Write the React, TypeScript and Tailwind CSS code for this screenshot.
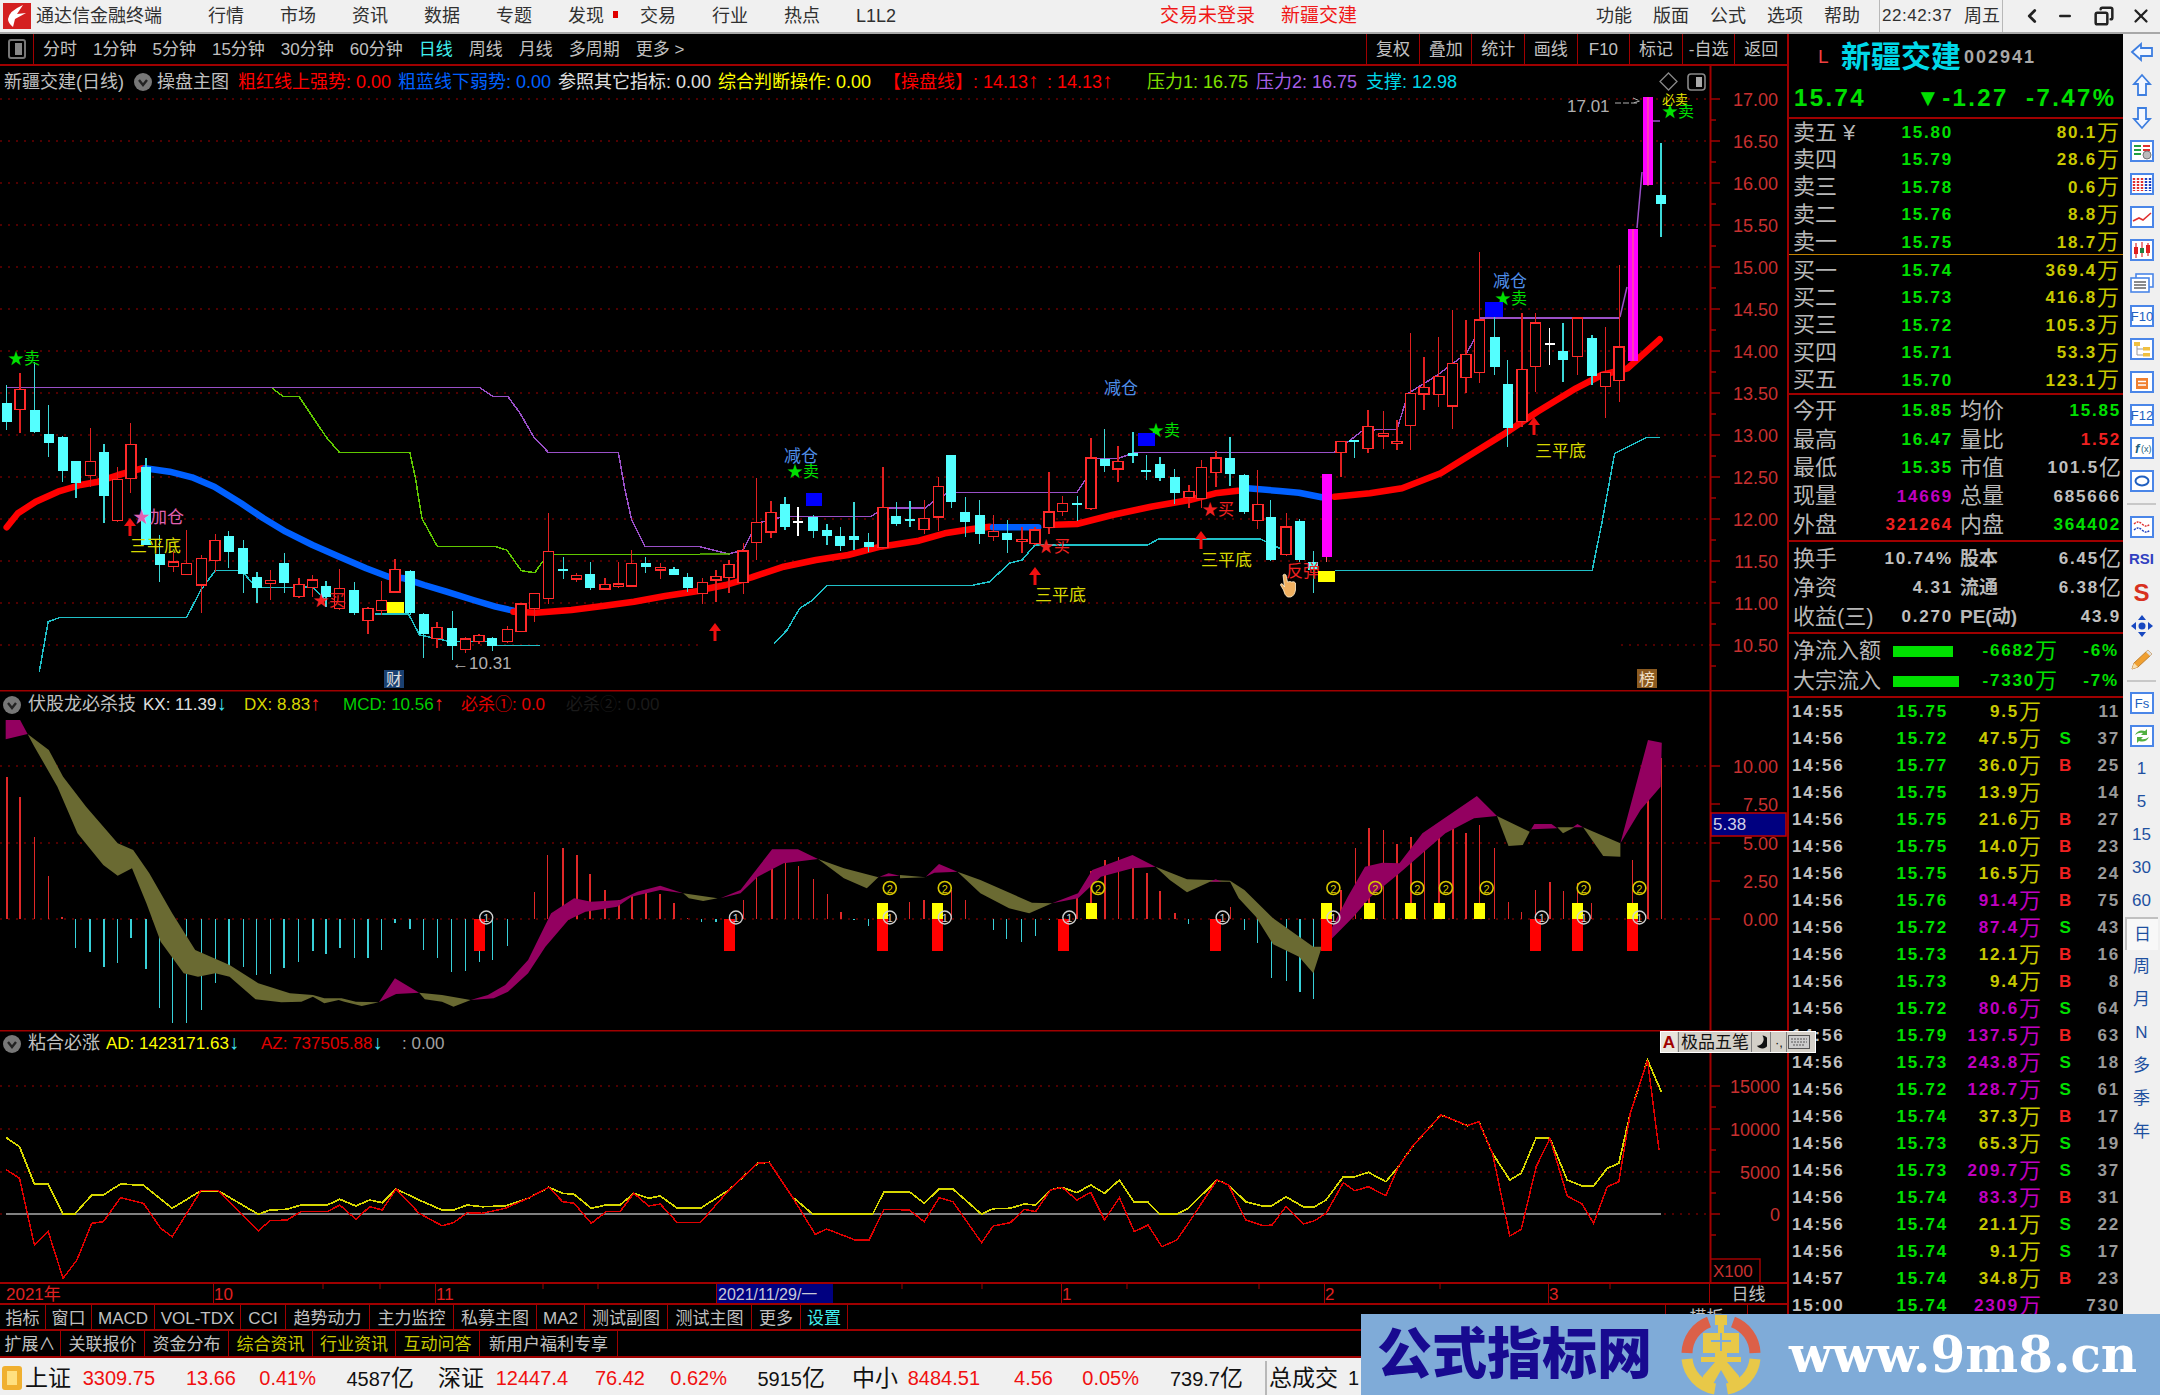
import React from 'react';
import { ChevronLeft, Copy, Minus, X } from 'lucide-react';

type Pt = [number, number];
type Candle = [number, string, number, number, number, number];
const z7 = (p: Pt): Pt => [p[0] / 2.24, 330 + p[1] / 3];
const z8 = (p: Pt): Pt => [700 + p[0] / 1.5525, 330 + p[1] / 3];
const z9 = (p: Pt): Pt => [p[0] / 1.742, 690 + p[1] / 3];
const z10 = (p: Pt): Pt => [900 + p[0] / 1.742, 690 + p[1] / 3];
const z11 = (p: Pt): Pt => [p[0] / 0.871, 1030 + p[1] / 3];
const pts = (list: Pt[], f: (p: Pt) => Pt) => list.map((p) => f(p).map((n) => n.toFixed(1)).join(',')).join(' ');

// candles: x, colour, wick top, body top, body bottom, wick bottom
const candles7: Candle[] = [
  [15, 'c', 165, 218, 275, 300], [45, 'r', 130, 178, 238, 310], [78, 'c', 95, 240, 305, 310], [109, 'c', 225, 312, 338, 382],
  [140, 'c', 318, 320, 422, 455], [170, 'c', 392, 392, 460, 505], [203, 'r', 293, 394, 436, 470], [233, 'c', 343, 366, 498, 580],
  [263, 'r', 410, 448, 572, 575], [293, 'r', 280, 344, 445, 490], [327, 'c', 385, 412, 645, 645], [358, 'c', 615, 672, 706, 755],
  [388, 'r', 665, 696, 710, 725], [418, 'r', 600, 700, 733, 735], [452, 'r', 675, 686, 765, 850], [482, 'r', 612, 632, 692, 725],
  [512, 'c', 603, 618, 666, 715], [545, 'c', 630, 654, 733, 788], [576, 'c', 725, 740, 773, 820], [606, 'r', 720, 752, 760, 810],
  [637, 'c', 670, 698, 760, 788], [670, 'r', 743, 764, 800, 803], [700, 'r', 735, 750, 772, 800], [730, 'c', 752, 768, 800, 830],
  [761, 'r', 716, 776, 836, 840], [794, 'c', 757, 780, 850, 855], [824, 'r', 830, 835, 872, 913], [855, 'r', 752, 812, 842, 855],
  [885, 'r', 688, 718, 786, 790], [919, 'c', 720, 722, 850, 855], [949, 'c', 850, 852, 913, 985], [979, 'r', 875, 893, 925, 953],
  [1013, 'c', 843, 893, 948, 990], [1043, 'r', 920, 927, 958, 968], [1073, 'r', 913, 917, 935, 942], [1103, 'c', 920, 924, 947, 962],
  [1137, 'r', 888, 898, 935, 940], [1167, 'r', 822, 822, 904, 905], [1197, 'r', 790, 790, 835, 875], [1228, 'r', 550, 664, 805, 822],
  [1262, 'c', 680, 716, 722, 748], [1292, 'r', 728, 737, 747, 757], [1322, 'c', 695, 731, 775, 780], [1355, 'r', 745, 763, 777, 778],
  [1385, 'r', 695, 762, 770, 775], [1415, 'r', 660, 700, 768, 770], [1446, 'c', 680, 699, 711, 730], [1480, 'r', 700, 712, 720, 748],
  [1510, 'c', 712, 717, 734, 735], [1540, 'c', 730, 740, 775, 785],
];
const candles8: Candle[] = [
  [4, 'r', 745, 757, 790, 822], [25, 'r', 720, 740, 750, 815], [45, 'r', 690, 703, 742, 790], [67, 'r', 640, 663, 757, 792],
  [88, 'r', 445, 578, 637, 690], [110, 'r', 513, 547, 606, 625], [132, 'c', 500, 523, 590, 600], [152, 'w', 532, 573, 575, 617],
  [176, 'c', 555, 560, 603, 625], [197, 'c', 583, 600, 617, 645], [218, 'c', 590, 618, 647, 662], [239, 'c', 517, 618, 630, 660],
  [262, 'c', 608, 636, 650, 665], [284, 'r', 410, 532, 653, 656], [305, 'c', 515, 559, 582, 587], [326, 'c', 514, 568, 574, 590],
  [348, 'r', 510, 565, 598, 612], [370, 'r', 440, 470, 561, 602], [390, 'c', 374, 374, 515, 535], [412, 'c', 500, 545, 577, 620],
  [434, 'c', 510, 555, 612, 643], [456, 'r', 555, 605, 620, 632], [477, 'c', 570, 608, 630, 670], [500, 'r', 590, 628, 634, 668],
  [520, 'r', 590, 600, 640, 645], [542, 'r', 425, 546, 592, 612], [563, 'r', 497, 520, 544, 558], [586, 'c', 497, 519, 522, 572],
  [607, 'r', 325, 384, 535, 540], [628, 'c', 297, 388, 408, 425], [649, 'r', 348, 394, 417, 455], [672, 'c', 305, 370, 378, 400],
  [693, 'c', 375, 420, 423, 450], [714, 'c', 380, 402, 445, 453], [737, 'c', 418, 442, 490, 522], [759, 'r', 465, 484, 502, 533],
  [779, 'r', 390, 412, 505, 533], [801, 'r', 363, 384, 427, 470], [823, 'c', 320, 383, 432, 468], [845, 'c', 432, 434, 545, 552],
  [866, 'r', 420, 524, 571, 597], [886, 'c', 510, 560, 690, 692], [910, 'r', 550, 591, 673, 678], [931, 'c', 567, 572, 690, 695],
  [952, 'c', 662, 695, 720, 788], [973, 'p', 433, 433, 680, 695], [995, 'r', 335, 335, 367, 440], [1016, 'c', 335, 330, 337, 383],
  [1037, 'r', 240, 290, 355, 370], [1061, 'r', 243, 311, 318, 358], [1082, 'r', 270, 334, 341, 360], [1103, 'r', 10, 190, 287, 360],
  [1124, 'r', 80, 172, 192, 240], [1147, 'r', 22, 140, 193, 230], [1168, 'r', -60, 100, 228, 296], [1189, 'r', -30, 73, 143, 190],
  [1210, 'r', -234, -30, 128, 158], [1234, 'c', -39, 22, 112, 135], [1254, 'c', 90, 163, 293, 352], [1276, 'r', -51, 118, 275, 290],
  [1297, 'r', -51, -21, 110, 185], [1319, 'w', -6, 38, 40, 105], [1340, 'c', -20, 64, 90, 157], [1362, 'r', -39, -36, 80, 135],
  [1385, 'c', 15, 24, 138, 165], [1406, 'r', -9, 128, 170, 265], [1427, 'r', -195, 51, 152, 215],
];

const redA: Pt[] = [[15, 592], [40, 550], [80, 515], [130, 485], [180, 465], [220, 455], [265, 435], [318, 415]];
const blueA: Pt[] = [[325, 415], [380, 425], [430, 442], [480, 470], [540, 520], [590, 565], [640, 605], [700, 645], [760, 680], [820, 715], [870, 740], [905, 745], [950, 765], [1000, 785], [1060, 810], [1110, 830], [1150, 842]];
const redB: Pt[] = [[1150, 845], [1200, 848], [1280, 840], [1350, 828], [1420, 815], [1490, 798], [1568, 782]];
const redC: Pt[] = [[0, 780], [40, 765], [80, 742], [130, 710], [180, 690], [230, 675], [280, 650], [340, 632], [380, 610], [420, 598], [450, 590]];
const blueC: Pt[] = [[455, 592], [525, 592]];
const redD: Pt[] = [[540, 585], [585, 582], [640, 555], [700, 530], [760, 510], [800, 490], [835, 482]];
const blueD: Pt[] = [[850, 475], [900, 483], [930, 488], [965, 502]];
const redE: Pt[] = [[985, 500], [1040, 490], [1090, 475], [1150, 430], [1200, 370], [1250, 310], [1300, 245], [1360, 175], [1400, 135], [1440, 115], [1490, 28]];
const purpleA: Pt[] = [[15, 173], [1075, 173], [1105, 200], [1138, 200], [1165, 250], [1195, 320], [1228, 367], [1385, 367], [1400, 480], [1415, 570], [1445, 650], [1568, 650]];
const purpleB: Pt[] = [[0, 650], [45, 672], [67, 660], [88, 580], [130, 560], [265, 560], [285, 534], [350, 534], [365, 510], [385, 488], [585, 488], [605, 430], [610, 385], [650, 385], [675, 367], [985, 367], [1030, 300], [1082, 298], [1100, 190], [1145, 135], [1190, 70], [1210, 0], [1212, -36], [1427, -36]];
const greenA: Pt[] = [[610, 175], [635, 200], [670, 200], [700, 260], [730, 320], [760, 367], [918, 367], [930, 440], [945, 565], [980, 650], [1110, 650], [1135, 660], [1168, 722], [1198, 728], [1215, 695], [1240, 673], [1568, 673]];
const cyanA: Pt[] = [[88, 1025], [108, 875], [135, 862], [418, 862], [450, 780], [482, 722], [540, 722], [575, 772], [660, 772], [700, 770], [730, 810]];
const cyanB: Pt[] = [[840, 852], [915, 852], [940, 915], [1010, 935], [1090, 935], [1115, 947], [1210, 947]];
const cyanC: Pt[] = [[115, 940], [135, 900], [155, 835], [175, 810], [197, 767], [420, 767], [450, 755], [480, 700], [500, 690], [520, 645], [695, 645], [712, 627], [870, 627], [900, 655]];
const cyanD: Pt[] = [[985, 722], [1385, 722], [1400, 580], [1420, 370], [1470, 322], [1490, 322]];

const bodyClass: Record<string, string> = {
  c: 'fill-[#54ffff]', r: 'fill-black stroke-[#ff2a2a]', w: 'fill-white', p: 'fill-[#ff00ff]',
};
const wickClass: Record<string, string> = {
  c: 'stroke-[#3cd8d8]', r: 'stroke-[#e02020]', w: 'stroke-white', p: 'stroke-[#ff5a60]',
};

function CandleMark({ x, k, wt, bt, bb, wb, w = 10 }: { x: number; k: string; wt: number; bt: number; bb: number; wb: number; w?: number }) {
  return (
    <g shapeRendering="crispEdges">
      <line x1={x} x2={x} y1={wt} y2={wb} className={wickClass[k]} strokeWidth={1.3} />
      <rect x={x - w / 2} y={bt} width={w} height={Math.max(bb - bt, 2)} className={bodyClass[k]} strokeWidth={k === 'r' ? 1.4 : 0} />
    </g>
  );
}

function Thin({ list, f, cls }: { list: Pt[]; f: (p: Pt) => Pt; cls: string }) {
  return <polyline points={pts(list, f)} fill="none" className={cls} strokeWidth={1.5} shapeRendering="crispEdges" />;
}
function Thick({ list, f, cls }: { list: Pt[]; f: (p: Pt) => Pt; cls: string }) {
  return <polyline points={pts(list, f)} fill="none" className={cls} strokeWidth={6.5} strokeLinecap="round" strokeLinejoin="round" />;
}

function Label({ x, y, cls, size = 17, children }: { x: number; y: number; cls: string; size?: number; children: React.ReactNode }) {
  return <text x={x} y={y} className={cls} fontSize={size}>{children}</text>;
}
function UpArrow({ x, y }: { x: number; y: number }) {
  return <path d={`M${x} ${y} l-6 8 h4.5 v10 h3 v-10 h4.5 z`} className="fill-[#f01010]" />;
}

function Chevron() {
  return (
    <svg viewBox="0 0 18 18" className="w-[18px] h-[18px] shrink-0">
      <circle cx="9" cy="9" r="9" className="fill-[#777]" />
      <path d="M5 7 L9 12 L13 7" className="stroke-[#222]" strokeWidth="2.4" fill="none" />
    </svg>
  );
}

const priceTicks = [17, 16.5, 16, 15.5, 15, 14.5, 14, 13.5, 13, 12.5, 12, 11.5, 11, 10.5];
const py = (p: number) => 99 + (17 - p) * 84;

function MainChart() {
  return (
    <div className="relative h-[624px] w-[1787px] shrink-0">
      <svg viewBox="0 66 1787 624" width={1787} height={624} className="block">
        {priceTicks.map((p) => (
          <g key={p}>
            {p === 10.5 ? (
              <>
                <line x1={0} x2={700} y1={py(p)} y2={py(p)} className="stroke-[#a00000]" strokeDasharray="2 6" />
                <line x1={1621} x2={1710} y1={py(p)} y2={py(p)} className="stroke-[#a00000]" strokeDasharray="2 6" />
              </>
            ) : (
              <line x1={0} x2={1710} y1={py(p)} y2={py(p)} className="stroke-[#a00000]" strokeDasharray="2 6" />
            )}
            <line x1={1710} x2={1720} y1={py(p)} y2={py(p)} className="stroke-[#a00000]" strokeWidth={1.5} />
            <line x1={1710} x2={1716} y1={py(p) + 21} y2={py(p) + 21} className="stroke-[#a00000]" strokeWidth={1.5} />
            <text x={1778} y={py(p) + 7} textAnchor="end" className="fill-[#c83030]" fontSize={18}>{p.toFixed(2)}</text>
          </g>
        ))}
        <line x1={1710.5} x2={1710.5} y1={66} y2={690} className="stroke-[#a00000]" strokeWidth={2} />

        <Thin list={purpleA} f={z7} cls="stroke-[#9a50c8]" />
        <Thin list={purpleB} f={z8} cls="stroke-[#9a50c8]" />
        <polyline points="1620,317 1627,287" className="stroke-[#9a50c8]" strokeWidth={1.5} fill="none" />
        <polyline points="1637,228 1642,172" className="stroke-[#9a50c8]" strokeWidth={1.5} fill="none" />
        <polyline points="1653,121 1660,121" className="stroke-[#9a50c8]" strokeWidth={1.5} fill="none" />
        <Thin list={greenA} f={z7} cls="stroke-[#60c800]" />
        <polyline points="700,554 730,554" className="stroke-[#60c800]" strokeWidth={1.5} fill="none" />
        <Thin list={cyanA} f={z7} cls="stroke-[#20c0c8]" />
        <Thin list={cyanB} f={z7} cls="stroke-[#20c0c8]" />
        <Thin list={cyanC} f={z8} cls="stroke-[#20c0c8]" />
        <Thin list={cyanD} f={z8} cls="stroke-[#20c0c8]" />

        <Thick list={redA} f={z7} cls="stroke-[#ff0000]" />
        <Thick list={blueA} f={z7} cls="stroke-[#0060ff]" />
        <Thick list={redB} f={z7} cls="stroke-[#ff0000]" />
        <Thick list={redC} f={z8} cls="stroke-[#ff0000]" />
        <Thick list={blueC} f={z8} cls="stroke-[#0060ff]" />
        <Thick list={redD} f={z8} cls="stroke-[#ff0000]" />
        <Thick list={blueD} f={z8} cls="stroke-[#0060ff]" />
        <Thick list={redE} f={z8} cls="stroke-[#ff0000]" />

        {candles7.map((c) => {
          const [x, wt] = z7([c[0], c[2]]);
          return <CandleMark key={`a${c[0]}`} x={x} k={c[1]} wt={wt} bt={z7([0, c[3]])[1]} bb={z7([0, c[4]])[1]} wb={z7([0, c[5]])[1]} />;
        })}
        {candles8.map((c) => {
          const [x, wt] = z8([c[0], c[2]]);
          return <CandleMark key={`b${c[0]}`} x={x} k={c[1]} wt={wt} bt={z8([0, c[3]])[1]} bb={z8([0, c[4]])[1]} wb={z8([0, c[5]])[1]} />;
        })}
        <CandleMark x={1592} k="c" wt={335} bt={338} bb={376} wb={385} />
        <rect x={1628} y={229} width={10} height={132} className="fill-[#ff00ff]" />
        <line x1={1633} x2={1633} y1={229} y2={361} className="stroke-[#ff7070]" />
        <rect x={1643} y={97} width={10} height={88} className="fill-[#ff00ff]" />
        <line x1={1648} x2={1648} y1={97} y2={186} className="stroke-[#ff7070]" />
        <CandleMark x={1661} k="c" wt={143} bt={195} bb={204} wb={237} />

        {/* signal labels */}
        <Label x={8} y={364} cls="fill-[#00e000]" size={16}>★卖</Label>
        <UpArrow x={130} y={518} />
        <Label x={133} y={523} cls="fill-[#e060b0]" size={17}>★加仓</Label>
        <Label x={130} y={552} cls="fill-[#d8d800]">三平底</Label>
        <Label x={313} y={606} cls="fill-[#f02020]" size={16}>★买</Label>
        <rect x={387} y={602} width={17} height={11} className="fill-[#ffff00]" />
        <Label x={452} y={669} cls="fill-[#b0b0b0]" size={17}>←10.31</Label>
        <rect x={384} y={670} width={20} height={18} className="fill-[#1a4070]" />
        <Label x={386} y={685} cls="fill-[#e0e0e0]" size={16}>财</Label>
        <Label x={784} y={462} cls="fill-[#4f8ee8]" size={17}>减仓</Label>
        <Label x={787} y={477} cls="fill-[#00e000]" size={16}>★卖</Label>
        <rect x={806} y={493} width={16} height={13} className="fill-[#0000ff]" />
        <Label x={1104} y={394} cls="fill-[#4f8ee8]" size={17}>减仓</Label>
        <Label x={1148} y={436} cls="fill-[#00e000]" size={16}>★卖</Label>
        <rect x={1138} y={433} width={17} height={13} className="fill-[#0000ff]" />
        <Label x={1038} y={552} cls="fill-[#f02020]" size={16}>★买</Label>
        <UpArrow x={1035} y={567} />
        <Label x={1035} y={601} cls="fill-[#d8d800]">三平底</Label>
        <UpArrow x={715} y={623} />
        <Label x={1202} y={515} cls="fill-[#f02020]" size={16}>★买</Label>
        <UpArrow x={1201} y={531} />
        <Label x={1201} y={566} cls="fill-[#d8d800]">三平底</Label>
        <Label x={1286} y={577} cls="fill-[#f02020]" size={17}>反弹</Label>
        <rect x={1318} y={571} width={17} height={11} className="fill-[#ffff00]" />
        <path d="M1283 575 q1.5 -1.5 3 0 l1.5 7 q3 -1 4 0 q3 -1 4 1 l0 7 q-1 6 -5 7 h-3 q-3 -2 -4 -7 l-3 -5 q0 -2 2 -1 l2 3 z" className="fill-[#f0b060] stroke-[#fff0d0]" strokeWidth={0.8} />
        <UpArrow x={1534} y={417} />
        <Label x={1535} y={457} cls="fill-[#d8d800]">三平底</Label>
        <Label x={1493} y={287} cls="fill-[#4f8ee8]" size={17}>减仓</Label>
        <Label x={1495} y={304} cls="fill-[#00e000]" size={16}>★卖</Label>
        <rect x={1485} y={302} width={18} height={15} className="fill-[#0000ff]" />
        <Label x={1567} y={112} cls="fill-[#b0b0b0]" size={17}>17.01</Label>
        <path d="M1615 103 h24 m-6 -5 l7 3 l-7 2" className="stroke-[#b0b0b0]" fill="none" strokeDasharray="6 2" />
        <Label x={1662} y={104} cls="fill-[#e8e800]" size={13}>必卖</Label>
        <Label x={1662} y={117} cls="fill-[#00e000]" size={16}>★卖</Label>
        <rect x={1637} y={669} width={20} height={19} className="fill-[#8b5a20]" />
        <Label x={1639} y={685} cls="fill-[#f0e0c8]" size={16}>榜</Label>
        <path d="M1668.5 73 l8.5 8.5 l-8.5 8.5 l-8.5 -8.5 z" fill="none" className="stroke-[#888]" strokeWidth={1.3} />
        <rect x={1688} y={74} width={17} height={16} rx={3} fill="none" className="stroke-[#888]" strokeWidth={1.6} />
        <rect x={1696} y={77} width={6} height={10} className="fill-[#aaa]" />
      </svg>
      <div className="absolute left-0 top-0 h-[30px] pt-[2px] flex items-center text-[18px] whitespace-nowrap">
        <span className="w-[134px] pl-[4px] text-[#c0c0c0]">新疆交建(日线)</span>
        <Chevron />
        <span className="w-[86px] pl-[5px] text-[#c0c0c0]">操盘主图</span>
        <span className="w-[160px] text-[#ff0000]">粗红线上强势: 0.00</span>
        <span className="w-[160px] text-[#0060ff]">粗蓝线下弱势: 0.00</span>
        <span className="w-[160px] text-[#e0e0e0]">参照其它指标: 0.00</span>
        <span className="w-[165px] text-[#ffff00]">综合判断操作: 0.00</span>
        <span className="w-[164px] text-[#ff0000]">【操盘线】: 14.13<span className="text-[21px] leading-none font-bold">↑</span></span>
        <span className="w-[100px] text-[#ff0000]">: 14.13<span className="text-[21px] leading-none font-bold">↑</span></span>
        <span className="w-[109px] text-[#80e000]">压力1: 16.75</span>
        <span className="w-[110px] text-[#a860e8]">压力2: 16.75</span>
        <span className="text-[#00d8e8]">支撑: 12.98</span>
      </div>
    </div>
  );
}

const ribbons: { k: 'p' | 'o'; f: (p: Pt) => Pt; d: Pt[] }[] = [
  { k: 'p', f: z9, d: [[10, 90], [35, 90], [48, 132], [10, 148]] },
  { k: 'o', f: z9, d: [[48, 132], [85, 180], [110, 260], [150, 350], [205, 460], [232, 480], [260, 550], [300, 670], [340, 780], [400, 825], [450, 880], [505, 910], [545, 915], [565, 925], [595, 925], [620, 935], [660, 937], [630, 948], [600, 935], [590, 930], [565, 940], [545, 920], [525, 935], [490, 937], [445, 928], [400, 860], [375, 850], [345, 860], [320, 850], [280, 755], [255, 640], [230, 535], [205, 557], [180, 525], [135, 430], [100, 290], [60, 170]] },
  { k: 'p', f: z9, d: [[660, 937], [688, 865], [730, 908], [690, 912]] },
  { k: 'o', f: z9, d: [[730, 908], [770, 915], [820, 930], [790, 950], [770, 935], [740, 928]] },
  { k: 'p', f: z9, d: [[820, 930], [850, 915], [880, 885], [920, 810], [960, 670], [1000, 625], [1030, 635], [1080, 630], [1110, 605], [1150, 587], [1190, 610], [1150, 600], [1100, 620], [1075, 650], [1020, 665], [990, 690], [950, 770], [920, 850], [885, 905], [860, 925]] },
  { k: 'o', f: z9, d: [[1190, 610], [1250, 625], [1225, 633], [1200, 625]] },
  { k: 'p', f: z9, d: [[1255, 625], [1290, 600], [1345, 478], [1390, 478], [1425, 507], [1365, 520], [1320, 560], [1290, 610]] },
  { k: 'o', f: z9, d: [[1425, 507], [1470, 535], [1530, 562], [1510, 595], [1470, 565]] },
  { k: 'p', f: z9, d: [[1530, 562], [1548, 550], [1568, 557], [1530, 560]] },
  { k: 'o', f: z10, d: [[0, 555], [45, 562], [0, 565]] },
  { k: 'p', f: z10, d: [[45, 560], [68, 522], [100, 545], [60, 548]] },
  { k: 'o', f: z10, d: [[100, 545], [140, 570], [230, 638], [265, 640], [225, 670], [190, 655], [140, 610]] },
  { k: 'p', f: z10, d: [[265, 640], [310, 610], [335, 540], [405, 495], [445, 530], [405, 535], [350, 560], [310, 625]] },
  { k: 'o', f: z10, d: [[445, 530], [500, 568], [575, 572], [600, 600], [650, 685], [720, 770], [735, 770], [720, 850], [695, 800], [650, 763], [620, 680], [590, 625], [575, 575], [540, 575], [500, 607], [470, 570]] },
  { k: 'p', f: z10, d: [[540, 575], [550, 568], [560, 575]] },
  { k: 'p', f: z10, d: [[735, 770], [780, 620], [810, 530], [840, 518], [870, 520], [910, 430], [1005, 318], [1040, 378], [1000, 385], [950, 430], [870, 550], [820, 620], [790, 680], [750, 750]] },
  { k: 'o', f: z10, d: [[1040, 378], [1097, 425], [1085, 465], [1060, 468]] },
  { k: 'p', f: z10, d: [[1097, 425], [1105, 402], [1135, 402], [1145, 415], [1100, 418]] },
  { k: 'o', f: z10, d: [[1145, 412], [1175, 412], [1155, 430]] },
  { k: 'p', f: z10, d: [[1172, 412], [1180, 402], [1190, 412]] },
  { k: 'o', f: z10, d: [[1190, 412], [1255, 460], [1255, 500], [1225, 498]] },
  { k: 'p', f: z10, d: [[1255, 460], [1303, 150], [1327, 158], [1325, 290], [1290, 360]] },
];
const bars9: Pt[] = [[12, 262], [35, 320], [60, 442], [85, 558], [108, 680], [131, 775], [157, 785], [181, 830], [205, 820], [228, 745], [254, 838], [278, 955], [301, 1000], [325, 1000], [351, 960], [375, 878], [399, 830], [424, 830], [447, 855], [471, 852], [495, 835], [520, 815], [545, 783], [568, 793], [592, 775], [618, 803], [641, 803], [665, 780], [688, 698], [714, 717], [738, 780], [762, 805], [787, 845], [811, 843], [835, 815], [858, 810], [884, 767], [931, 607], [954, 496], [981, 473], [1005, 495], [1028, 553], [1054, 600], [1078, 630], [1101, 615], [1125, 610], [1150, 612], [1174, 640], [1198, 685], [1222, 697], [1247, 697], [1295, 630], [1318, 558], [1345, 500], [1368, 508], [1391, 527], [1417, 568], [1441, 613], [1465, 665], [1488, 690], [1513, 707]];
const bars10: Pt[] = [[17, 635], [42, 630], [90, 600], [114, 630], [163, 720], [186, 748], [212, 757], [236, 738], [260, 690], [308, 625], [333, 543], [357, 510], [381, 500], [406, 497], [430, 548], [453, 603], [479, 670], [503, 703], [576, 652], [600, 720], [623, 760], [647, 865], [673, 873], [697, 905], [720, 928], [768, 600], [793, 473], [817, 415], [842, 420], [866, 463], [890, 442], [914, 430], [939, 418], [963, 418], [986, 430], [1010, 405], [1036, 473], [1060, 635], [1083, 665], [1107, 600], [1132, 577], [1156, 603], [1180, 580], [1205, 640], [1276, 510], [1303, 225], [1327, 205]];
const redBlocks = [...[835, 1271, 1538].map((x) => x / 1.742), ...[66, 284, 550, 743, 1107, 1180, 1276].map((x) => 900 + x / 1.742)];
const yellowBlocks = [1538 / 1.742, ...[66, 333, 743, 817, 890, 939, 1010, 1180, 1276].map((x) => 900 + x / 1.742)];
const ones = [...[847, 1282, 1550].map((x) => x / 1.742), ...[78, 295, 562, 755, 1118, 1191, 1288].map((x) => 900 + x / 1.742)];
const twos = [1550 / 1.742, ...[78, 345, 755, 828, 901, 951, 1022, 1191, 1288].map((x) => 900 + x / 1.742)];

function Bar({ p, f }: { p: Pt; f: (p: Pt) => Pt }) {
  const [x, y] = f(p);
  return <line x1={x} x2={x} y1={919} y2={y} className={y < 919 ? 'stroke-[#e02828]' : 'stroke-[#38d0d8]'} strokeWidth={1.4} shapeRendering="crispEdges" />;
}

function DragonChart() {
  const axis: [string, number][] = [['10.00', 766], ['7.50', 804], ['5.00', 843], ['2.50', 881], ['0.00', 919]];
  return (
    <div className="relative h-[340px] w-[1787px] shrink-0">
      <svg viewBox="0 690 1787 340" width={1787} height={340} className="block">
        <line x1={0} x2={1787} y1={690.5} y2={690.5} className="stroke-[#a00000]" strokeWidth={2} />
        {[766, 843, 919].map((y) => <line key={y} x1={0} x2={1710} y1={y} y2={y} className="stroke-[#a00000]" strokeDasharray="2 6" />)}
        {axis.map(([t, y]) => (
          <g key={t}>
            <line x1={1710} x2={1720} y1={y} y2={y} className="stroke-[#a00000]" strokeWidth={1.5} />
            <text x={1778} y={y + 7} textAnchor="end" className="fill-[#c83030]" fontSize={18}>{t}</text>
          </g>
        ))}
        <line x1={1710.5} x2={1710.5} y1={690} y2={1030} className="stroke-[#a00000]" strokeWidth={2} />
        {bars9.map((p) => <Bar key={`b${p[0]}`} p={p} f={z9} />)}
        {bars10.map((p) => <Bar key={`c${p[0]}`} p={p} f={z10} />)}
        {ribbons.map((r, i) => <polygon key={i} points={pts(r.d, r.f)} className={r.k === 'p' ? 'fill-[#930060]' : 'fill-[#6a6a32]'} />)}
        {yellowBlocks.map((x) => <rect key={x} x={x - 5.5} y={903} width={11} height={16} className="fill-[#ffff00]" shapeRendering="crispEdges" />)}
        {redBlocks.map((x) => <rect key={x} x={x - 5.5} y={919} width={11} height={32} className="fill-[#ff0000]" shapeRendering="crispEdges" />)}
        {ones.map((x) => (
          <g key={x}>
            <ellipse cx={x} cy={917.5} rx={6.5} ry={6.5} fill="none" className="stroke-[#d0d0d0]" strokeWidth={1.4} />
            <text x={x} y={922} textAnchor="middle" className="fill-[#d0d0d0]" fontSize={11}>1</text>
          </g>
        ))}
        {twos.map((x) => (
          <g key={x}>
            <ellipse cx={x} cy={888} rx={6.5} ry={6.5} fill="none" className="stroke-[#d8c800]" strokeWidth={1.6} />
            <text x={x} y={892.5} textAnchor="middle" className="fill-[#d8c800]" fontSize={11}>2</text>
          </g>
        ))}
        <rect x={1711} y={813} width={75} height={23} className="fill-[#000080] stroke-[#c00000]" strokeWidth={1.5} />
        <text x={1713} y={830} className="fill-[#d0d0e8]" fontSize={17}>5.38</text>
      </svg>
      <div className="absolute left-0 top-0 h-[27px] pt-[2px] pl-[3px] flex items-center text-[17px] whitespace-nowrap">
        <Chevron />
        <span className="w-[122px] pl-[7px] text-[18px] text-[#c0c0c0]">伏股龙必杀技</span>
        <span className="w-[101px] text-[#e0e0e0]">KX: 11.39<span className="text-[20px] leading-none font-bold text-[#40e0f0]">↓</span></span>
        <span className="w-[99px] text-[#d8d800]">DX: 8.83<span className="text-[20px] leading-none font-bold text-[#ff2020]">↑</span></span>
        <span className="w-[118px] text-[#00d000]">MCD: 10.56<span className="text-[20px] leading-none font-bold text-[#ff2020]">↑</span></span>
        <span className="w-[105px] text-[#e00000]">必杀①: 0.0</span>
        <span className="text-[#1a1a1a]">必杀②: 0.00</span>
      </div>
    </div>
  );
}

const yellowLine: Pt[] = [[5, 322], [17, 350], [30, 462], [42, 463], [55, 553], [65, 553], [80, 495], [90, 495], [105, 462], [125, 466], [150, 535], [175, 482], [190, 482], [225, 553], [235, 540], [250, 538], [262, 525], [285, 525], [296, 508], [310, 528], [322, 510], [333, 518], [345, 477], [365, 510], [385, 540], [395, 540], [407, 525], [420, 530], [440, 528], [460, 505], [478, 472], [490, 490], [500, 493], [515, 535], [528, 525], [540, 525], [552, 490], [565, 505], [575, 498], [590, 535], [610, 535], [635, 480], [660, 400], [670, 397], [690, 500], [708, 553], [760, 553], [770, 485], [792, 485], [805, 520], [818, 477], [830, 477], [855, 553], [865, 536], [880, 535], [892, 522], [902, 525], [915, 480], [925, 472], [938, 488], [950, 465], [962, 490], [975, 450], [988, 517], [1000, 517], [1010, 553], [1025, 553], [1035, 535], [1060, 450], [1070, 465], [1085, 515], [1100, 528], [1108, 527], [1120, 500], [1135, 530], [1145, 530], [1155, 510], [1170, 440], [1180, 440], [1192, 427], [1207, 455], [1218, 410], [1230, 350], [1255, 255], [1270, 275], [1278, 287], [1288, 275], [1300, 370], [1315, 450], [1325, 430], [1338, 323], [1350, 325], [1365, 450], [1378, 468], [1388, 468], [1400, 415], [1410, 400], [1420, 250], [1435, 90], [1447, 185]];
const redLine: Pt[] = [[5, 418], [17, 445], [30, 645], [42, 605], [55, 745], [67, 690], [80, 580], [90, 575], [105, 503], [125, 520], [140, 595], [150, 620], [175, 482], [190, 482], [225, 603], [235, 572], [250, 570], [262, 545], [285, 545], [296, 525], [310, 568], [322, 530], [333, 540], [345, 477], [365, 550], [385, 587], [395, 578], [407, 548], [420, 550], [440, 535], [460, 505], [478, 472], [490, 515], [500, 520], [515, 580], [528, 545], [540, 545], [552, 490], [565, 528], [575, 522], [590, 578], [610, 578], [635, 480], [660, 400], [670, 397], [690, 500], [710, 613], [720, 597], [745, 630], [757, 630], [770, 538], [792, 540], [805, 575], [818, 503], [830, 515], [855, 638], [865, 588], [880, 578], [892, 538], [902, 545], [915, 480], [925, 472], [938, 510], [950, 487], [962, 570], [975, 503], [988, 605], [1000, 585], [1012, 650], [1025, 630], [1035, 580], [1060, 450], [1070, 465], [1085, 570], [1100, 587], [1108, 585], [1120, 530], [1135, 582], [1145, 572], [1155, 550], [1170, 458], [1180, 482], [1192, 470], [1207, 497], [1218, 410], [1230, 350], [1255, 255], [1270, 275], [1278, 287], [1288, 275], [1300, 370], [1315, 618], [1325, 598], [1338, 410], [1350, 325], [1365, 498], [1378, 522], [1388, 580], [1400, 470], [1410, 455], [1420, 250], [1435, 90], [1445, 360]];

function AdChart() {
  const axis: [string, number][] = [['15000', 1086], ['10000', 1129], ['5000', 1172], ['0', 1214]];
  return (
    <div className="relative h-[252px] w-[1787px] shrink-0">
      <svg viewBox="0 1030 1787 252" width={1787} height={252} className="block">
        <line x1={0} x2={1787} y1={1030.5} y2={1030.5} className="stroke-[#a00000]" strokeWidth={2} />
        {axis.map(([t, y]) => (
          <g key={t}>
            <line x1={0} x2={1710} y1={y} y2={y} className="stroke-[#a00000]" strokeDasharray="2 6" />
            <line x1={1710} x2={1720} y1={y} y2={y} className="stroke-[#a00000]" strokeWidth={1.5} />
            <line x1={1710} x2={1716} y1={y + 21} y2={y + 21} className="stroke-[#a00000]" strokeWidth={1.5} />
            <text x={1780} y={y + 7} textAnchor="end" className="fill-[#c83030]" fontSize={18}>{t}</text>
          </g>
        ))}
        <line x1={1710.5} x2={1710.5} y1={1030} y2={1282} className="stroke-[#a00000]" strokeWidth={2} />
        <line x1={6} x2={1661} y1={1214} y2={1214} className="stroke-[#808080]" strokeWidth={2} />
        <polyline points={pts(yellowLine, z11)} fill="none" className="stroke-[#d8d800]" strokeWidth={1.7} shapeRendering="crispEdges" />
        <polyline points={pts(redLine, z11)} fill="none" className="stroke-[#e00000]" strokeWidth={1.5} shapeRendering="crispEdges" />
        <path d="M1711 1259 h49 v23" fill="none" className="stroke-[#a00000]" strokeWidth={1.5} />
        <text x={1713} y={1277} className="fill-[#c83030]" fontSize={17}>X100</text>
      </svg>
      <div className="absolute left-0 top-0 h-[25px] pt-[2px] pl-[3px] flex items-center text-[17px] whitespace-nowrap">
        <Chevron />
        <span className="w-[85px] pl-[7px] text-[18px] text-[#c0c0c0]">粘合必涨</span>
        <span className="w-[155px] text-[#ffff00]">AD: 1423171.63<span className="text-[20px] leading-none font-bold text-[#40e0f0]">↓</span></span>
        <span className="w-[141px] text-[#e00000]">AZ: 737505.88<span className="text-[20px] leading-none font-bold text-[#40e0f0]">↓</span></span>
        <span className="text-[#a0a0a0]">: 0.00</span>
      </div>
    </div>
  );
}

function TitleBar() {
  const menus = ['行情', '市场', '资讯', '数据', '专题'];
  return (
    <div className="h-[34px] shrink-0 flex items-center bg-[#f0f0f0] border-b-2 border-[#a8a8a8] text-[18px] text-[#303030] whitespace-nowrap">
      <svg viewBox="0 0 28 26" className="ml-[3px] w-[28px] h-[26px] shrink-0">
        <rect width="28" height="26" fill="#d42020" />
        <path d="M20 2 Q6 8 5 16 Q5 20 10 24 L12 16 L23 10 L14 11 Z" fill="#fff" />
      </svg>
      <span className="ml-[5px] w-[172px]">通达信金融终端</span>
      <div className="flex gap-[36px]">
        {menus.map((m) => <span key={m}>{m}</span>)}
        <span className="relative">发现<span className="absolute left-[45px] top-[8px] w-[5px] h-[7px] bg-[#e00000]" /></span>
        <span>交易</span>
        <span>行业</span>
        <span>热点</span>
        <span>L1L2</span>
      </div>
      <span className="ml-[264px] w-[121px] text-[19px] text-[#f01818]">交易未登录</span>
      <span className="text-[19px] text-[#f01818]">新疆交建</span>
      <div className="ml-[239px] flex gap-[21px]">
        <span>功能</span><span>版面</span><span>公式</span><span>选项</span><span>帮助</span>
      </div>
      <div className="ml-[19px] h-full flex items-center border-l border-r border-[#b8b8b8] pl-[2px] w-[124px]">
        <span className="w-[82px] text-[17px] tracking-[0.5px]">22:42:37</span>
        <span>周五</span>
      </div>
      <ChevronLeft className="ml-[18px] w-[22px] h-[24px] text-[#222]" strokeWidth={3} />
      <Minus className="ml-[14px] w-[16px] h-[20px] text-[#222]" strokeWidth={4} />
      <Copy className="ml-[21px] w-[20px] h-[20px] text-[#222] -scale-x-100" strokeWidth={3} />
      <X className="ml-[16px] w-[22px] h-[22px] text-[#222]" strokeWidth={2.5} />
    </div>
  );
}

function Toolbar() {
  const periods = ['分时', '1分钟', '5分钟', '15分钟', '30分钟', '60分钟'];
  const right = ['复权', '叠加', '统计', '画线', 'F10', '标记', '-自选', '返回'];
  return (
    <div className="h-[32px] w-[1787px] shrink-0 flex items-center border-b-2 border-[#a00000] text-[17px] text-[#c0c0c0] whitespace-nowrap">
      <div className="w-[34px] h-full flex items-center justify-center border-r border-[#a00000]">
        <span className="w-[18px] h-[20px] border-2 border-[#777] rounded-[3px] flex justify-end p-[2px]">
          <span className="w-[7px] bg-[#888]" />
        </span>
      </div>
      <div className="ml-[9px] pt-[2px] flex gap-[16px]">
        {periods.map((p) => <span key={p}>{p}</span>)}
        <span className="text-[#40f0f0]">日线</span>
        <span>周线</span>
        <span>月线</span>
        <span>多周期</span>
        <span>更多 &gt;</span>
      </div>
      <div className="ml-auto flex h-full">
        {right.map((r) => (
          <span key={r} className="w-[52.6px] h-full pt-[2px] flex items-center justify-center border-l border-[#a00000]">{r}</span>
        ))}
      </div>
    </div>
  );
}

function DateAxis() {
  return (
    <div className="relative h-[23px] w-[1787px] shrink-0 flex items-stretch border-t-2 border-b-2 border-[#a00000] text-[17px] leading-[21px] text-[#e02020] whitespace-nowrap">
      <span className="w-[214px] pl-[6px] border-r border-[#a00000]">2021年</span>
      <span className="w-[222px] border-r border-[#a00000]">10</span>
      <span className="w-[281px] border-r border-[#a00000]">11</span>
      <span className="w-[116px] bg-[#000080] text-[#c8c8d8] text-[16px] pl-px">2021/11/29/一</span>
      <span className="w-[229px] border-r border-[#a00000]" />
      <span className="w-[263px] border-r border-[#a00000]">1</span>
      <span className="w-[224px] border-r border-[#a00000]">2</span>
      <span className="w-[161px] border-r border-[#a00000]">3</span>
      <span className="flex-1 text-center text-[#c0c0c0]">日线</span>
      <svg className="absolute left-0 top-0 pointer-events-none" width={1710} height={6}>
        {[323, 380, 543, 598, 902, 982, 1127, 1259, 1440, 1610].map((x) => (
          <line key={x} x1={x} x2={x} y1={0} y2={5} className="stroke-[#a00000]" />
        ))}
      </svg>
    </div>
  );
}

const tabsTop: [string, string][] = [
  ['指标', 'w-[46px] text-[#c0c0c0]'], ['窗口', 'w-[46px] text-[#c0c0c0]'], ['MACD', 'w-[63px] text-[#c0c0c0]'], ['VOL-TDX', 'w-[86px] text-[#c0c0c0]'],
  ['CCI', 'w-[45px] text-[#c0c0c0]'], ['趋势动力', 'w-[84px] text-[#c0c0c0]'], ['主力监控', 'w-[84px] text-[#c0c0c0]'], ['私募主图', 'w-[83px] text-[#c0c0c0]'],
  ['MA2', 'w-[48px] text-[#c0c0c0]'], ['测试副图', 'w-[83px] text-[#c0c0c0]'], ['测试主图', 'w-[84px] text-[#c0c0c0]'], ['更多', 'w-[49px] text-[#c0c0c0]'],
  ['设置', 'w-[47px] text-[#40f0f0]'],
];
const tabsBottom: [string, string][] = [
  ['扩展∧', 'w-[61px] text-[#c0c0c0]'], ['关联报价', 'w-[84px] text-[#c0c0c0]'], ['资金分布', 'w-[84px] text-[#c0c0c0]'], ['综合资讯', 'w-[84px] text-[#c8c800]'],
  ['行业资讯', 'w-[83px] text-[#c8c800]'], ['互动问答', 'w-[84px] text-[#c8c800]'], ['新用户福利专享', 'w-[138px] text-[#c0c0c0]'],
];

function TabRow({ tabs, cls, children }: { tabs: [string, string][]; cls: string; children?: React.ReactNode }) {
  return (
    <div className={`${cls} w-[1787px] shrink-0 flex border-b-2 border-[#a00000] text-[17px] whitespace-nowrap`}>
      {tabs.map(([t, c]) => (
        <span key={t} className={`${c} pt-[3px] flex items-center justify-center border-r border-[#a00000]`}>{t}</span>
      ))}
      {children}
    </div>
  );
}

function StatusBar() {
  const red = 'text-[20px] text-[#f01010]';
  return (
    <div className="h-[37px] w-[1787px] shrink-0 flex items-center bg-[#f0f0f0] pt-[3px] text-[#111] whitespace-nowrap text-right">
      <span className="ml-[2px] w-[20px] h-[24px] rounded-[3px] bg-[#f0a020] border-[5px] border-[#f0b030] shrink-0">
        <span className="block w-full h-full bg-[#ffe080]" />
      </span>
      <span className="ml-[3px] w-[50px] text-left text-[23px]">上证</span>
      <span className={`w-[80px] ${red}`}>3309.75</span>
      <span className={`w-[81px] ${red}`}>13.66</span>
      <span className={`w-[80px] ${red}`}>0.41%</span>
      <span className="w-[98px] text-[20px]">4587<span className="text-[23px]">亿</span></span>
      <span className="ml-[24px] w-[48px] text-left text-[23px]">深证</span>
      <span className={`w-[82px] ${red}`}>12447.4</span>
      <span className={`w-[77px] ${red}`}>76.42</span>
      <span className={`w-[82px] ${red}`}>0.62%</span>
      <span className="w-[98px] text-[20px]">5915<span className="text-[23px]">亿</span></span>
      <span className="ml-[27px] w-[47px] text-left text-[23px]">中小</span>
      <span className={`w-[81px] ${red}`}>8484.51</span>
      <span className={`w-[73px] ${red}`}>4.56</span>
      <span className={`w-[86px] ${red}`}>0.05%</span>
      <span className="w-[104px] text-[20px]">739.7<span className="text-[23px]">亿</span></span>
      <span className="ml-[22px] h-full border-l-2 border-[#b8b8b8] pl-[2px] text-[23px] flex items-center">总成交</span>
      <span className="ml-[10px] text-[20px]">1</span>
    </div>
  );
}

const num = 'text-[17px] font-bold tracking-[1.8px]';
const cjk = 'text-[22px] leading-none text-[#b8b8b8]';

function Wan({ v, cls, unit = '万' }: { v: string; cls: string; unit?: string }) {
  return (
    <div className={`flex items-center justify-end ${cls}`}>
      <span className={num}>{v}</span>
      <span className="text-[22px] leading-none">{unit}</span>
    </div>
  );
}

const book: [string, string, string][] = [
  ['卖五 ¥', '15.80', '80.1'], ['卖四', '15.79', '28.6'], ['卖三', '15.78', '0.6'], ['卖二', '15.76', '8.8'], ['卖一', '15.75', '18.7'],
];
const book2: [string, string, string][] = [
  ['买一', '15.74', '369.4'], ['买二', '15.73', '416.8'], ['买三', '15.72', '105.3'], ['买四', '15.71', '53.3'], ['买五', '15.70', '123.1'],
];
const stats: [string, string, string, string, string, string][] = [
  ['今开', '15.85', 'text-[#00e000]', '均价', '15.85', 'text-[#00e000]'],
  ['最高', '16.47', 'text-[#00e000]', '量比', '1.52', 'text-[#f02020]'],
  ['最低', '15.35', 'text-[#00e000]', '市值', '101.5亿', 'text-[#c0c0c0]'],
  ['现量', '14669', 'text-[#c000c0]', '总量', '685666', 'text-[#c0c0c0]'],
  ['外盘', '321264', 'text-[#f02020]', '内盘', '364402', 'text-[#00e000]'],
];
const ticks: [string, string, string, string, string][] = [
  ['14:55', '15.75', '9.5', '', '11'], ['14:56', '15.72', '47.5', 'S', '37'], ['14:56', '15.77', '36.0', 'B', '25'], ['14:56', '15.75', '13.9', '', '14'],
  ['14:56', '15.75', '21.6', 'B', '27'], ['14:56', '15.75', '14.0', 'B', '23'], ['14:56', '15.75', '16.5', 'B', '24'], ['14:56', '15.76', '91.4', 'B', '75'],
  ['14:56', '15.72', '87.4', 'S', '43'], ['14:56', '15.73', '12.1', 'B', '16'], ['14:56', '15.73', '9.4', 'B', '8'], ['14:56', '15.72', '80.6', 'S', '64'],
  ['14:56', '15.79', '137.5', 'B', '63'], ['14:56', '15.73', '243.8', 'S', '18'], ['14:56', '15.72', '128.7', 'S', '61'], ['14:56', '15.74', '37.3', 'B', '17'],
  ['14:56', '15.73', '65.3', 'S', '19'], ['14:56', '15.73', '209.7', 'S', '37'], ['14:56', '15.74', '83.3', 'B', '31'], ['14:56', '15.74', '21.1', 'S', '22'],
  ['14:56', '15.74', '9.1', 'S', '17'], ['14:57', '15.74', '34.8', 'B', '23'], ['15:00', '15.74', '2309', '', '730'],
];

function BookRows({ rows }: { rows: [string, string, string][] }) {
  return (
    <>
      {rows.map(([l, p, v]) => (
        <div key={l} className="h-[27.4px] grid grid-cols-[60px_104px_166px] items-center">
          <span className={`${cjk} pl-[4px] whitespace-nowrap`}>{l}</span>
          <span className={`${num} text-right text-[#00e000]`}>{p}</span>
          <Wan v={v} cls="text-[#c8c800]" />
        </div>
      ))}
    </>
  );
}

function QuotePanel() {
  return (
    <div className="w-[336px] shrink-0 border-l-2 border-[#a00000] overflow-hidden whitespace-nowrap">
      <div className="h-[44px] pt-[2px] flex items-center">
        <span className="ml-[29px] w-[23px] text-[19px] text-[#f04040]">L</span>
        <span className="w-[123px] text-[30px] font-bold leading-none text-[#00d8e8]">新疆交建</span>
        <span className="text-[18px] font-bold tracking-[2px] text-[#a8a8a8]">002941</span>
      </div>
      <div className="h-[41px] flex items-center border-b-2 border-[#a00000] text-[24px] font-bold text-[#00e000] tracking-[2.4px]">
        <span className="ml-[5px] w-[122px]">15.74</span>
        <span className="w-[110px]">▼-1.27</span>
        <span>-7.47%</span>
      </div>
      <div className="h-[136px] border-b border-[#c08000]">
        <BookRows rows={book} />
      </div>
      <div className="h-[140px] pt-[2px] border-b-2 border-[#a00000]">
        <BookRows rows={book2} />
      </div>
      <div className="h-[147px] pt-[2px] border-b-2 border-[#a00000]">
        {stats.map(([a, av, ac, b, bv, bc]) => (
          <div key={a} className="h-[28.4px] grid grid-cols-[60px_104px_58px_110px] items-center">
            <span className={`${cjk} pl-[4px]`}>{a}</span>
            <span className={`${num} text-right ${ac}`}>{av}</span>
            <span className={`${cjk} pl-[7px]`}>{b}</span>
            {bv.endsWith('亿') ? <Wan v={bv.slice(0, -1)} cls={bc} unit="亿" /> : <span className={`${num} text-right ${bc}`}>{bv}</span>}
          </div>
        ))}
      </div>
      <div className="h-[92px] pt-[2px] border-b-2 border-[#a00000]">
        {[
          ['换手', '10.74%', '股本', '6.45'],
          ['净资', '4.31', '流通', '6.38'],
          ['收益(三)', '0.270', 'PE(动)', '43.9'],
        ].map(([a, av, b, bv]) => (
          <div key={a} className="h-[29px] grid grid-cols-[66px_98px_58px_110px] items-center">
            <span className={`${cjk} pl-[4px] text-[20px]`}>{a}</span>
            <span className={`${num} text-right text-[#c0c0c0]`}>{av}</span>
            <span className="pl-[7px] text-[19px] font-bold leading-none text-[#b8b8b8]">{b}</span>
            {b === 'PE(动)' ? <span className={`${num} text-right text-[#c0c0c0]`}>{bv}</span> : <Wan v={bv} cls="text-[#c0c0c0]" unit="亿" />}
          </div>
        ))}
      </div>
      <div className="h-[64px] pt-[2px] border-b-2 border-[#a00000]">
        <div className="h-[30px] flex items-center">
          <span className={`${cjk} w-[104px] pl-[4px]`}>净流入额</span>
          <span className="w-[60px] h-[11px] bg-[#00e000]" />
          <Wan v="-6682" cls="w-[104px] text-[#00e000]" />
          <span className={`${num} w-[62px] text-right text-[#00e000]`}>-6%</span>
        </div>
        <div className="h-[30px] flex items-center">
          <span className={`${cjk} w-[104px] pl-[4px]`}>大宗流入</span>
          <span className="w-[66px] h-[11px] bg-[#00e000]" />
          <Wan v="-7330" cls="w-[98px] text-[#00e000]" />
          <span className={`${num} w-[62px] text-right text-[#00e000]`}>-7%</span>
        </div>
      </div>
      {ticks.map(([t, p, v, s, n], i) => {
        const big = parseFloat(v) >= 80;
        return (
          <div key={i} className="h-[27px] grid grid-cols-[60px_99px_93px_50px_29px] items-center">
            <span className={`${num} pl-[3px] text-[#c0c0c0]`}>{t}</span>
            <span className={`${num} text-right text-[#00e000]`}>{p}</span>
            <Wan v={v} cls={big ? 'text-[#c000c0]' : 'text-[#c8c800]'} />
            <span className={`${num} text-center ${s === 'B' ? 'text-[#f02020]' : 'text-[#00e000]'}`}>{s}</span>
            <div className="flex justify-end"><span className={`${num} text-[#9a9a9a]`}>{n}</span></div>
          </div>
        );
      })}
    </div>
  );
}

function Frame({ children }: { children?: React.ReactNode }) {
  return (
    <svg viewBox="0 0 24 22" className="w-[24px] h-[22px]">
      <rect x="1" y="1" width="22" height="20" fill="#fff" stroke="#4a86e8" strokeWidth="2" />
      {children}
    </svg>
  );
}
function Arrow({ d }: { d: string }) {
  return (
    <svg viewBox="0 0 24 24" className="w-[24px] h-[24px]">
      <path d={d} fill="#f4f8ff" stroke="#3d7ee0" strokeWidth="1.8" />
    </svg>
  );
}
function FrameText({ t, cls }: { t: string; cls: string }) {
  return <Frame><text x="12" y="16" textAnchor="middle" fontSize="13" className={cls}>{t}</text></Frame>;
}

const sideIcons: React.ReactNode[] = [
  <Arrow d="M2 12 L11 4 V8 H22 V16 H11 V20 Z" />,
  <Arrow d="M12 2 L20 11 H16 V22 H8 V11 H4 Z" />,
  <Arrow d="M12 22 L20 13 H16 V2 H8 V13 H4 Z" />,
  <Frame><path d="M4 6 H11 M4 10 H11 M4 14 H11" stroke="#20a040" strokeWidth="2" /><path d="M13 6 H20 M13 10 H20" stroke="#e03030" strokeWidth="2" /><circle cx="17" cy="15" r="4" fill="#bbb" stroke="#777" /></Frame>,
  <Frame><path d="M4 5 V18 M8 5 V18 M12 5 V18" stroke="#e03030" strokeWidth="2.4" strokeDasharray="2 1" /><path d="M16 5 V18 M20 5 V18" stroke="#2040c0" strokeWidth="2.4" strokeDasharray="2 1" /></Frame>,
  <Frame><path d="M3 15 L9 12 L13 14 L21 7" stroke="#e03030" strokeWidth="1.6" fill="none" /></Frame>,
  <Frame><path d="M6 4 V19 M12 3 V18 M18 4 V17" stroke="#e03030" strokeWidth="1.2" /><rect x="4" y="8" width="4" height="7" fill="#e02020" /><rect x="10" y="9" width="4" height="5" fill="#208040" /><rect x="16" y="6" width="4" height="8" fill="#e02020" /></Frame>,
  <svg viewBox="0 0 24 22" className="w-[24px] h-[22px]"><rect x="6" y="2" width="17" height="13" fill="#fff" stroke="#4a86e8" strokeWidth="1.6" /><rect x="1" y="6" width="18" height="14" fill="#fff" stroke="#4a86e8" strokeWidth="1.6" /><path d="M4 10 H16 M4 13 H16 M4 16 H16" stroke="#666" strokeWidth="1.3" /></svg>,
  <FrameText t="F10" cls="fill-[#2060c0]" />,
  <Frame><rect x="4" y="4" width="6" height="4" fill="#f0c040" /><rect x="13" y="9" width="7" height="3.5" fill="#f0c040" /><rect x="13" y="15" width="7" height="3.5" fill="#f0c040" /><path d="M7 8 V17 H13 M7 11 H13" stroke="#999" fill="none" /></Frame>,
  <Frame><path d="M6 7 H18 V18 H6 Z" fill="#f08030" /><path d="M9 4 H15 M8 10.5 H16 M8 14 H16" stroke="#fff" strokeWidth="1.6" /></Frame>,
  <FrameText t="F12" cls="fill-[#2060c0]" />,
  <Frame><text x="5" y="16" fontSize="13" fontStyle="italic" fontWeight="700" className="fill-[#206080]">f</text><text x="11" y="15" fontSize="9" className="fill-[#206080]">(x)</text></Frame>,
  <Frame><ellipse cx="12" cy="11" rx="6.5" ry="4.5" fill="none" stroke="#2060c0" strokeWidth="2" /></Frame>,
];
const sideIcons2: React.ReactNode[] = [
  <Frame><path d="M4 8 q4 -4 8 0 t8 0" stroke="#e03030" strokeWidth="1.4" fill="none" strokeDasharray="2 1" /><path d="M4 14 q4 -4 8 0 t8 0" stroke="#2040c0" strokeWidth="1.4" fill="none" strokeDasharray="2 1" /></Frame>,
  <span className="text-[15px] font-bold text-[#3040c0]">RSI</span>,
  <span className="text-[24px] leading-none font-bold text-[#d83020]">S</span>,
  <svg viewBox="0 0 24 24" className="w-[24px] h-[24px]" fill="#1848c0"><path d="M12 1 l4 5 h-8 z M12 23 l4 -5 h-8 z M1 12 l5 -4 v8 z M23 12 l-5 -4 v8 z" /><circle cx="12" cy="12" r="3.5" /></svg>,
  <svg viewBox="0 0 24 24" className="w-[24px] h-[24px]"><path d="M18 3 L22 7 L8 20 L2 22 L4 16 Z" fill="#f0a030" stroke="#c08030" /><path d="M18 3 L22 7 L20 9 L16 5 Z" fill="#e0e0e0" /><path d="M4 16 L8 20 L2 22 Z" fill="#f8e0b0" /></svg>,
];

function SideCell({ children, cls = '' }: { children: React.ReactNode; cls?: string }) {
  return <div className={`h-[33px] shrink-0 flex items-center justify-center ${cls}`}>{children}</div>;
}

function Sidebar() {
  return (
    <div className="w-[37px] shrink-0 flex flex-col bg-[#f0f0f0] text-[17px] text-[#1e50a0]">
      <div className="h-px" />
      {sideIcons.map((n, i) => <SideCell key={i}>{n}</SideCell>)}
      <div className="h-[13px] flex items-center px-[4px]"><div className="w-full h-[2px] bg-[#c8c8c8]" /></div>
      {sideIcons2.map((n, i) => <SideCell key={i}>{n}</SideCell>)}
      <div className="h-[11px] flex items-center px-[4px]"><div className="w-full h-[2px] bg-[#c8c8c8]" /></div>
      <SideCell><FrameText t="Fs" cls="fill-[#2060c0]" /></SideCell>
      <SideCell><Frame><path d="M5 10 q3 -6 10 -4 l2 -2 v6 h-6 l2 -2 q-4 -1 -8 2z M19 12 q-3 6 -10 4 l-2 2 v-6 h6 l-2 2 q4 1 8 -2z" fill="#50b040" /></Frame></SideCell>
      {['1', '5', '15', '30', '60'].map((t) => <SideCell key={t}>{t}</SideCell>)}
      <SideCell cls="mx-[2px] border-t-2 border-l-2 border-[#c0c0c0] bg-[#f8f8f8]">日</SideCell>
      {['周', '月', 'N', '多', '季', '年'].map((t) => <SideCell key={t}>{t}</SideCell>)}
    </div>
  );
}

function ImeBar() {
  return (
    <div className="absolute left-[1660px] top-[1031px] w-[156px] h-[22px] flex items-center gap-px bg-[#d4d0c8] border border-white text-[17px] leading-none text-[#111] whitespace-nowrap">
      <span className="w-[16px] h-full flex items-center justify-center bg-[#e8e4dc] font-bold text-[#a00000]">A</span>
      <span className="px-[2px] h-full flex items-center border-x border-[#808080]">极品五笔</span>
      <span className="w-[18px] h-full flex items-center justify-center border-r border-[#808080]">
        <svg viewBox="0 0 12 14" className="w-[11px] h-[14px]"><path d="M7 0 A7 7 0 1 1 1 11 A7 7 0 0 0 7 0 Z" fill="#111" /></svg>
      </span>
      <span className="w-[15px] h-full flex items-center justify-center border-r border-[#808080] text-[13px]">·,</span>
      <svg viewBox="0 0 22 14" className="w-[22px] h-[14px]"><rect x="0.5" y="0.5" width="21" height="13" fill="#ccc" stroke="#555" /><path d="M3 4 H19 M3 7 H19 M5 10 H17" stroke="#555" strokeDasharray="2 1" /></svg>
    </div>
  );
}

function WatermarkLogo() {
  return (
    <svg viewBox="0 0 80 80" className="w-[80px] h-[80px] shrink-0">
      <path d="M6 38 A34 34 0 0 1 28 7" fill="none" stroke="#dc6048" strokeWidth="11" />
      <path d="M52 7 A34 34 0 0 1 74 38" fill="none" stroke="#dc6048" strokeWidth="11" />
      <path d="M6 44 A34 34 0 0 0 34 74" fill="none" stroke="#e8c848" strokeWidth="11" />
      <path d="M46 74 A34 34 0 0 0 74 44" fill="none" stroke="#e8c848" strokeWidth="11" />
      <path d="M34 0 h12 v10 h-3 v8 h15 v20 h-12 v4 h14 v5 h-14 l12 14 v8 h-10 l-8 -14 l-8 14 h-10 v-8 l12 -14 h-14 v-5 h14 v-4 h-12 v-20 h15 v-8 h-3 z" fill="#e8c848" />
      <path d="M30 26 h20 M40 18 v18" stroke="#7fabd8" strokeWidth="2" />
    </svg>
  );
}

export default function App() {
  return (
    <div className="relative w-[2160px] h-[1395px] flex flex-col overflow-hidden bg-black font-['Liberation_Sans','Noto_Sans_CJK_SC',sans-serif]">
      <TitleBar />
      <div className="flex flex-1 min-h-0">
        <div className="w-[1787px] shrink-0 flex flex-col">
          <Toolbar />
          <MainChart />
          <DragonChart />
          <AdChart />
          <DateAxis />
          <TabRow tabs={tabsTop} cls="h-[26px]">
            <span className="ml-[817px] w-[83px] flex justify-center border-x border-[#a00000] text-[#c0c0c0]">模板</span>
          </TabRow>
          <TabRow tabs={tabsBottom} cls="h-[27px]" />
          <StatusBar />
        </div>
        <QuotePanel />
        <Sidebar />
      </div>
      <ImeBar />
      <div className="absolute left-[1361px] top-[1314px] w-[799px] h-[81px] flex items-center bg-[#7fabd8] whitespace-nowrap">
        <span className="ml-[16px] w-[304px] text-[55px] leading-none font-black text-[#180a90]">公式指标网</span>
        <WatermarkLogo />
        <span className="ml-[28px] font-['DejaVu_Serif',serif] text-[50px] leading-none font-bold text-white">www.9m8.cn</span>
      </div>
    </div>
  );
}
